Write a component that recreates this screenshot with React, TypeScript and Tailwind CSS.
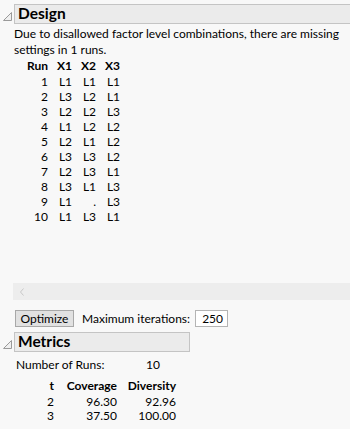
import React from "react";

const Tri = () => (
  <svg width="14" height="20" viewBox="0 0 14 20" className="shrink-0">
    <path d="M3.5 16.5 L11.5 16.5 L11.5 8.5 Z" fill="#f0f0f0" stroke="#9a9a9a" strokeWidth="1" />
  </svg>
);

const rows = [
  ["1", "L1", "L1", "L1"],
  ["2", "L3", "L2", "L1"],
  ["3", "L2", "L2", "L3"],
  ["4", "L1", "L2", "L2"],
  ["5", "L2", "L1", "L2"],
  ["6", "L3", "L3", "L2"],
  ["7", "L2", "L3", "L1"],
  ["8", "L3", "L1", "L3"],
  ["9", "L1", ".", "L3"],
  ["10", "L1", "L3", "L1"],
];

export default function App() {
  return (
    <div
      className="w-[350px] h-[429px] bg-[#f8f8f8] text-black overflow-hidden text-[12px] whitespace-nowrap"
      style={{ fontFamily: 'Lato, "Noto Sans", sans-serif' }}
    >
      {/* Design header */}
      <div className="flex items-stretch pt-[4px]">
        <Tri />
        <div className="flex-1 h-[20px] bg-[#ebebeb] border border-r-0 border-[#c4c4c4] flex items-center pl-[3px]">
          <span className="font-bold text-[15.5px] leading-none">Design</span>
        </div>
      </div>
      <div className="pl-[14px] pt-[2px] leading-[16px]">
        <div>Due to disallowed factor level combinations, there are missing</div>
        <div>settings in 1 runs.</div>
      </div>
      {/* table */}
      <div className="pl-[14px]">
        <div className="grid grid-cols-[34px_24px_24px_24px] h-[16px] leading-[16px] font-bold">
          <div className="text-right">Run</div>
          <div className="text-right">X1</div>
          <div className="text-right">X2</div>
          <div className="text-right">X3</div>
        </div>
        {rows.map((r) => (
          <div key={r[0]} className="grid grid-cols-[34px_24px_24px_24px] h-[15px] leading-[15px]">
            {r.map((c, i) => (
              <div key={i} className="text-right">{c}</div>
            ))}
          </div>
        ))}
      </div>
      {/* spacer + scrollbar */}
      <div className="h-[59px]" />
      <div className="ml-[13px] h-[17px] bg-[#ededed] flex items-center pl-[6px]">
        <svg width="6" height="8" viewBox="0 0 6 8">
          <path d="M4.5 0.5 L1.5 4 L4.5 7.5" fill="none" stroke="#c8c8c8" strokeWidth="1" />
        </svg>
      </div>
      {/* Optimize row */}
      <div className="flex items-center pl-[15px] pt-[10px] h-[27px]">
        <div className="h-[17px] w-[59px] border border-[#a8a8a8] bg-[#e1e1e1] flex items-center justify-center leading-none">
          Optimize
        </div>
        <span className="ml-[8px]">Maximum iterations:</span>
        <div className="ml-[5px] h-[17px] w-[33px] border border-[#b4b4b4] bg-white flex items-center justify-end pr-[4px] leading-none">
          250
        </div>
      </div>
      {/* Metrics header */}
      <div className="flex items-stretch pt-[5px]">
        <Tri />
        <div className="w-[176px] h-[20px] bg-[#ebebeb] border border-[#c4c4c4] flex items-center pl-[3px]">
          <span className="font-bold text-[15.5px] leading-none">Metrics</span>
        </div>
      </div>
      <div className="pl-[16px] pt-[3px] flex h-[23px] items-center">
        <span className="w-[130px]">Number of Runs:</span>
        <span>10</span>
      </div>
      <div className="pl-[14px] pt-[3px]">
        <div className="grid grid-cols-[40px_63px_59px] h-[17px] leading-[16px] font-bold">
          <div className="text-right">t</div>
          <div className="text-right">Coverage</div>
          <div className="text-right">Diversity</div>
        </div>
        {[
          ["2", "96.30", "92.96"],
          ["3", "37.50", "100.00"],
        ].map((r) => (
          <div key={r[0]} className="grid grid-cols-[40px_63px_59px] h-[14px] leading-[14px]">
            {r.map((c, i) => (
              <div key={i} className="text-right">{c}</div>
            ))}
          </div>
        ))}
      </div>
    </div>
  );
}
